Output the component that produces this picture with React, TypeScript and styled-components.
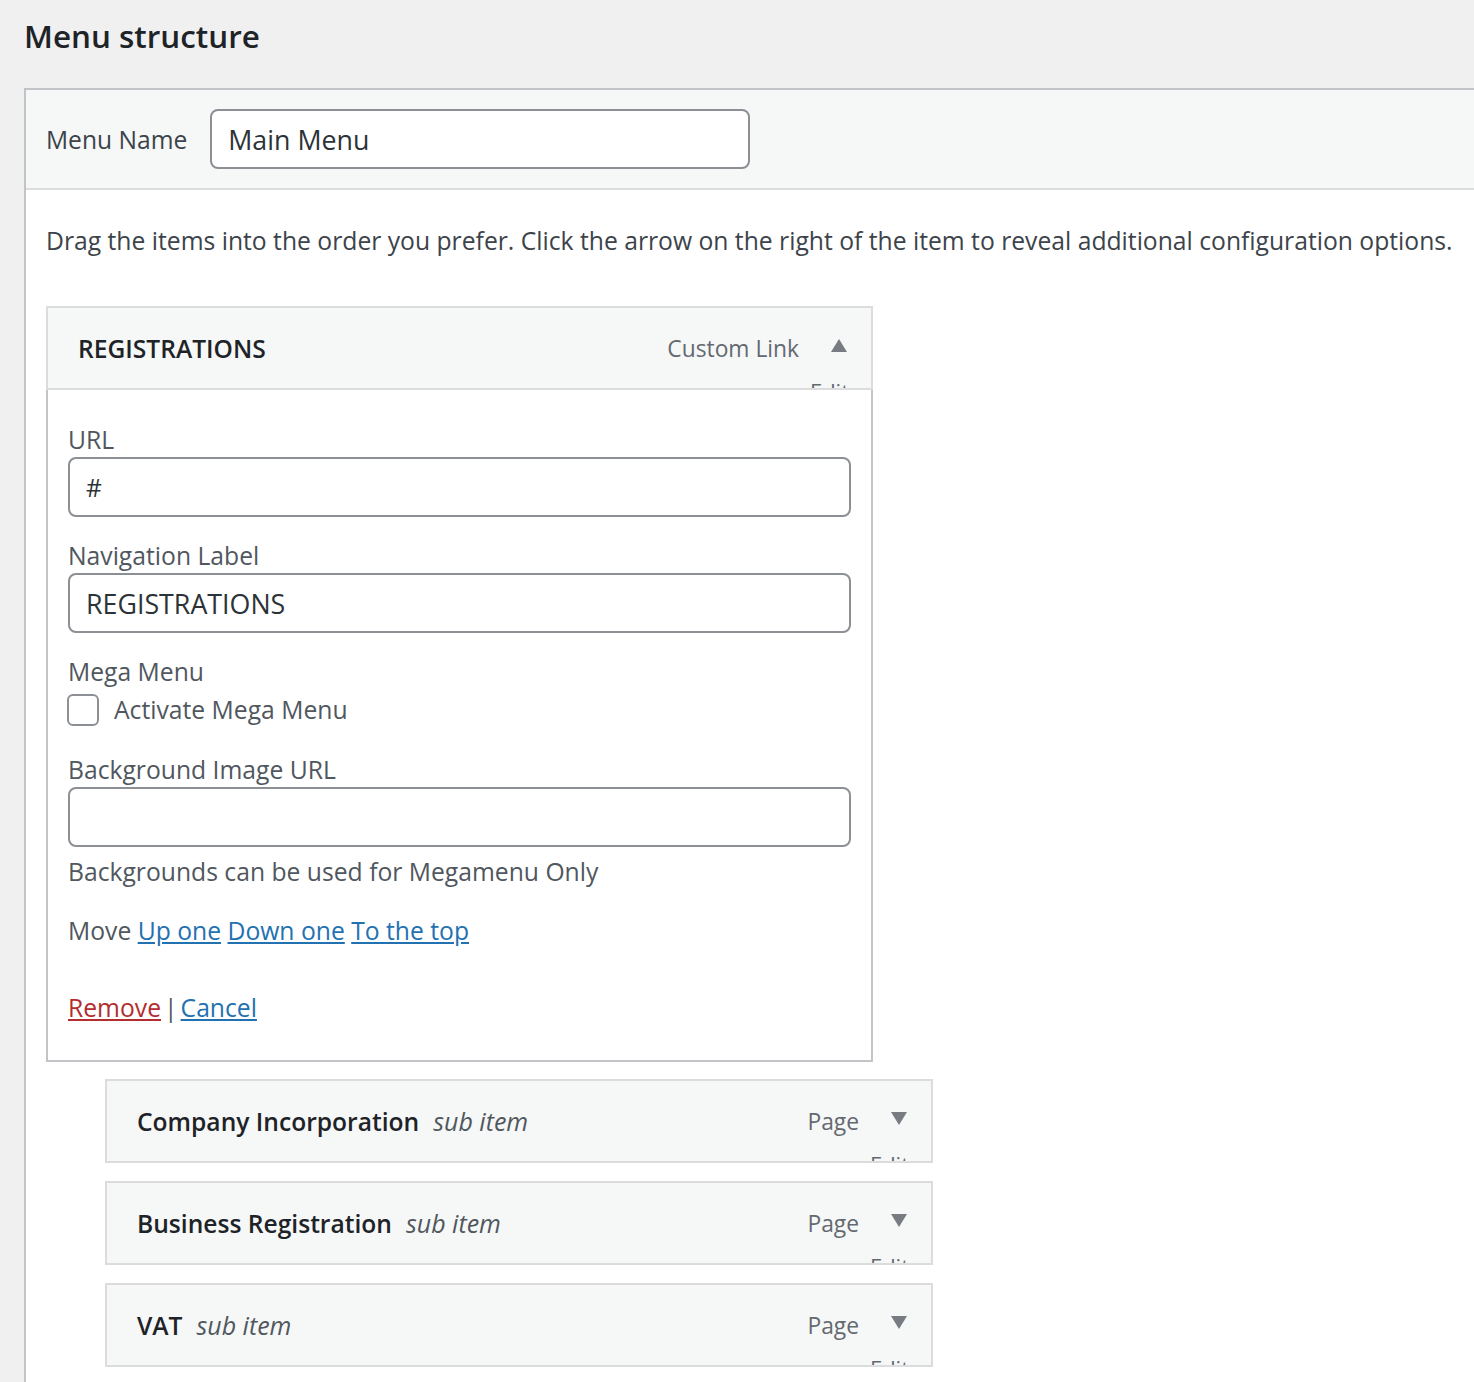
import React from "react";
import styled, { createGlobalStyle } from "styled-components";

const GlobalStyle = createGlobalStyle`
  body {
    margin: 0;
    background: #f0f0f1;
    font-family: "Open Sans", "Noto Sans", sans-serif;
    color: #3c434a;
  }
`;

const Page = styled.div`
  width: 1474px;
  height: 1382px;
  overflow: hidden;
  padding-left: 24px;
  box-sizing: border-box;
`;

const Heading = styled.h2`
  margin: 0;
  padding: 14px 0 0 0;
  height: 88px;
  box-sizing: border-box;
  font-size: 31.4px;
  font-weight: 600;
  color: #1d2327;
`;

const Panel = styled.div`
  border: 2px solid #c3c4c7;
  border-right: none;
  border-bottom: none;
  background: #fff;
  min-height: 1400px;
`;

const NameBar = styled.div`
  display: flex;
  align-items: center;
  gap: 23px;
  height: 98px;
  padding: 0 20px;
  background: #f6f7f7;
  border-bottom: 2px solid #dcdcde;
`;

const NameLabel = styled.label`
  font-size: 24.6px;
  color: #3c434a;
`;

const TextBox = styled.input<{ $width?: number; $big?: boolean }>`
  width: ${(p) => (p.$width ? `${p.$width}px` : "100%")};
  height: 60px;
  box-sizing: border-box;
  border: 2px solid #8c8f94;
  border-radius: 8px;
  padding: 0 16px;
  font-family: inherit;
  font-size: ${(p) => (p.$big ? "26.8px" : "24.6px")};
  color: #2c3338;
  background: #fff;
  outline: none;
`;

const Body = styled.div`
  padding: 0 20px;
`;

const Instructions = styled.p`
  margin: 0;
  padding: 34px 0 48px;
  font-size: 24.7px;
  line-height: 34px;
  white-space: nowrap;
  color: #3c434a;
`;

const ItemBar = styled.div<{ $indent?: boolean }>`
  position: relative;
  display: flex;
  align-items: center;
  width: ${(p) => (p.$indent ? "828px" : "827px")};
  height: 84px;
  box-sizing: border-box;
  margin-left: ${(p) => (p.$indent ? "59px" : "0")};
  padding: 0 24px 0 30px;
  background: #f6f7f7;
  border: 2px solid #dcdcde;
  overflow: hidden;
`;

const ItemTitle = styled.span`
  font-size: 24.6px;
  font-weight: 600;
  color: #1d2327;
`;

const SubTag = styled.span`
  margin-left: 14px;
  font-size: 25px;
  font-style: italic;
  color: #50575e;
`;

const ItemType = styled.span`
  margin-left: auto;
  font-size: 22.8px;
  color: #646970;
`;

const Arrow = styled.span<{ $up?: boolean }>`
  margin-left: 32px;
  width: 0;
  height: 0;
  border-left: 8px solid transparent;
  border-right: 8px solid transparent;
  margin-top: -6px;
  ${(p) =>
    p.$up
      ? "border-bottom: 13px solid #787c82;"
      : "border-top: 13px solid #787c82;"}
`;

const HiddenEdit = styled.span`
  position: absolute;
  right: 22px;
  bottom: -18px;
  font-size: 22px;
  color: #646970;
`;

const Settings = styled.div`
  width: 827px;
  box-sizing: border-box;
  border: 2px solid #c3c4c7;
  border-top: none;
  padding: 33px 20px 35px;
  background: #fff;
`;

const Field = styled.div<{ $gap?: number }>`
  margin-bottom: ${(p) => p.$gap ?? 22}px;
`;

const FieldLabel = styled.div`
  font-size: 24.7px;
  line-height: 34px;
  color: #50575e;
`;

const CheckRow = styled.label`
  display: flex;
  align-items: center;
  gap: 15px;
  margin-top: 4px;
  font-size: 24.7px;
  line-height: 34px;
  color: #50575e;
`;

const CheckBox = styled.span`
  width: 32px;
  height: 32px;
  margin-left: -1px;
  box-sizing: border-box;
  border: 2px solid #8c8f94;
  border-radius: 6px;
  background: #fff;
`;

const Note = styled.div`
  margin-top: 8px;
  font-size: 24.7px;
  line-height: 34px;
  color: #50575e;
`;

const MoveRow = styled.div`
  margin-top: 25px;
  font-size: 24.7px;
  line-height: 34px;
  color: #50575e;
`;

const Link = styled.a<{ $danger?: boolean }>`
  color: ${(p) => (p.$danger ? "#b32d2e" : "#2271b1")};
  text-decoration: underline;
  cursor: pointer;
`;

const Actions = styled.div`
  margin-top: 43px;
  font-size: 24.7px;
  line-height: 34px;
  color: #50575e;
`;

const Sep = styled.span`
  margin: 0 3px;
`;

const SubList = styled.div`
  display: flex;
  flex-direction: column;
  gap: 18px;
  margin-top: 17px;
`;

const subItems = ["Company Incorporation", "Business Registration", "VAT"];

export default function App() {
  return (
    <Page>
      <GlobalStyle />
      <Heading>Menu structure</Heading>
      <Panel>
        <NameBar>
          <NameLabel htmlFor="menu-name">Menu Name</NameLabel>
          <TextBox id="menu-name" $width={540} $big defaultValue="Main Menu" />
        </NameBar>
        <Body>
          <Instructions>
            Drag the items into the order you prefer. Click the arrow on the right of the item to reveal additional configuration options.
          </Instructions>

          <ItemBar>
            <ItemTitle>REGISTRATIONS</ItemTitle>
            <ItemType>Custom Link</ItemType>
            <Arrow $up />
            <HiddenEdit>Edit</HiddenEdit>
          </ItemBar>
          <Settings>
            <Field>
              <FieldLabel>URL</FieldLabel>
              <TextBox defaultValue="#" />
            </Field>
            <Field>
              <FieldLabel>Navigation Label</FieldLabel>
              <TextBox $big defaultValue="REGISTRATIONS" />
            </Field>
            <Field $gap={26}>
              <FieldLabel>Mega Menu</FieldLabel>
              <CheckRow>
                <CheckBox />
                Activate Mega Menu
              </CheckRow>
            </Field>
            <div>
              <FieldLabel>Background Image URL</FieldLabel>
              <TextBox defaultValue="" />
            </div>
            <Note>Backgrounds can be used for Megamenu Only</Note>
            <MoveRow>
              Move <Link>Up one</Link> <Link>Down one</Link> <Link>To the top</Link>
            </MoveRow>
            <Actions>
              <Link $danger>Remove</Link>
              <Sep>|</Sep>
              <Link>Cancel</Link>
            </Actions>
          </Settings>

          <SubList>
            {subItems.map((name) => (
              <ItemBar $indent key={name}>
                <ItemTitle>{name}</ItemTitle>
                <SubTag>sub item</SubTag>
                <ItemType>Page</ItemType>
                <Arrow />
                <HiddenEdit>Edit</HiddenEdit>
              </ItemBar>
            ))}
          </SubList>
        </Body>
      </Panel>
    </Page>
  );
}
